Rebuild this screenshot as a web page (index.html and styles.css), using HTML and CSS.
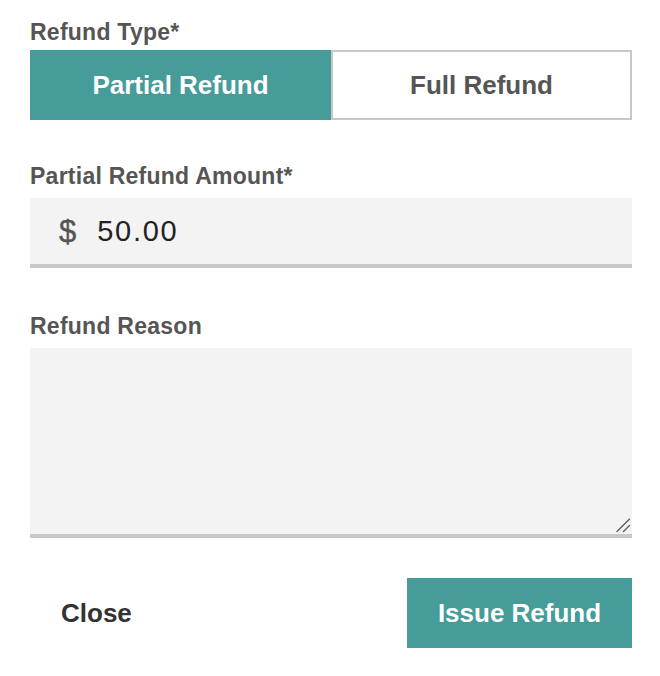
FILE: index.html
```html
<!DOCTYPE html>
<html lang="en">
<head>
<meta charset="utf-8">
<title>Refund</title>
<link rel="stylesheet" href="styles.css">
</head>
<body>
<form class="refund-form">
  <div class="field">
    <label class="field-label">Refund Type*</label>
    <div class="toggle-group">
      <button type="button" class="toggle toggle-active">Partial Refund</button>
      <button type="button" class="toggle">Full Refund</button>
    </div>
  </div>

  <div class="field field-amount">
    <label class="field-label" for="amount">Partial Refund Amount*</label>
    <div class="amount-box">
      <span class="currency">$</span>
      <input id="amount" class="amount-input" type="text" value="50.00">
    </div>
  </div>

  <div class="field field-reason">
    <label class="field-label" for="reason">Refund Reason</label>
    <div class="reason-wrap">
      <textarea id="reason" class="reason-input"></textarea>
      <svg class="resize-grip" width="16" height="16" viewBox="0 0 16 16" aria-hidden="true">
        <line x1="2" y1="14.5" x2="14.5" y2="2" stroke="#5a5a5a" stroke-width="1.3" stroke-linecap="round"/>
        <line x1="8.5" y1="14.5" x2="14.5" y2="8.5" stroke="#5a5a5a" stroke-width="1.3" stroke-linecap="round"/>
      </svg>
    </div>
  </div>

  <div class="actions">
    <button type="button" class="btn btn-close">Close</button>
    <button type="button" class="btn btn-issue">Issue Refund</button>
  </div>
</form>
</body>
</html>
```

FILE: styles.css
```css
html, body {
  margin: 0;
  padding: 0;
  background: #ffffff;
}

body {
  font-family: "Liberation Sans", Arial, Helvetica, sans-serif;
}

.refund-form {
  display: flex;
  flex-direction: column;
  padding: 19px 28px 0 30px;
}

.field {
  display: flex;
  flex-direction: column;
}

.field-label {
  display: block;
  font-size: 23px;
  line-height: 26px;
  font-weight: 700;
  color: #555555;
  letter-spacing: 0.25px;
  margin-bottom: 5px;
}

.field-amount {
  margin-top: 43px;
}

.field-amount .field-label,
.field-reason .field-label {
  margin-bottom: 9px;
}

.field-reason {
  margin-top: 45px;
}

.toggle-group {
  display: grid;
  grid-template-columns: 1fr 1fr;
  height: 70px;
}

.toggle {
  margin: 0;
  font-family: inherit;
  font-size: 26px;
  font-weight: 700;
  color: #555555;
  background: #ffffff;
  border: 2px solid #c8c8c8;
  cursor: pointer;
  padding: 0;
}

.toggle-active {
  background: #469c98;
  border-color: #469c98;
  color: #ffffff;
}

.amount-box {
  display: flex;
  align-items: center;
  height: 66px;
  background: #f3f3f3;
  border-bottom: 4px solid #c8c8c8;
  padding-left: 29px;
}

.currency {
  font-size: 31px;
  color: #555555;
  margin-right: 21px;
  margin-top: 2px;
  -webkit-text-stroke: 0.4px #555555;
}

.amount-input {
  flex: 1;
  min-width: 0;
  border: none;
  outline: none;
  background: transparent;
  font-family: inherit;
  font-size: 29px;
  letter-spacing: 1.7px;
  color: #222222;
  padding: 0;
  margin: 0;
}

.reason-wrap {
  position: relative;
}

.reason-input {
  display: block;
  box-sizing: border-box;
  width: 100%;
  height: 190px;
  margin: 0;
  border: none;
  border-bottom: 4px solid #c8c8c8;
  background: #f3f3f3;
  outline: none;
  resize: none;
  font-family: inherit;
  font-size: 20px;
  padding: 12px 30px;
}

.resize-grip {
  position: absolute;
  right: 1px;
  bottom: 5px;
  pointer-events: none;
}

.actions {
  display: flex;
  justify-content: space-between;
  margin-top: 40px;
}

.btn {
  height: 70px;
  margin: 0;
  border: none;
  font-family: inherit;
  font-size: 26px;
  font-weight: 700;
  cursor: pointer;
}

.btn-close {
  background: transparent;
  color: #333333;
  padding: 0 0 0 31px;
}

.btn-issue {
  width: 225px;
  background: #469c98;
  color: #ffffff;
  padding: 0;
}
```
